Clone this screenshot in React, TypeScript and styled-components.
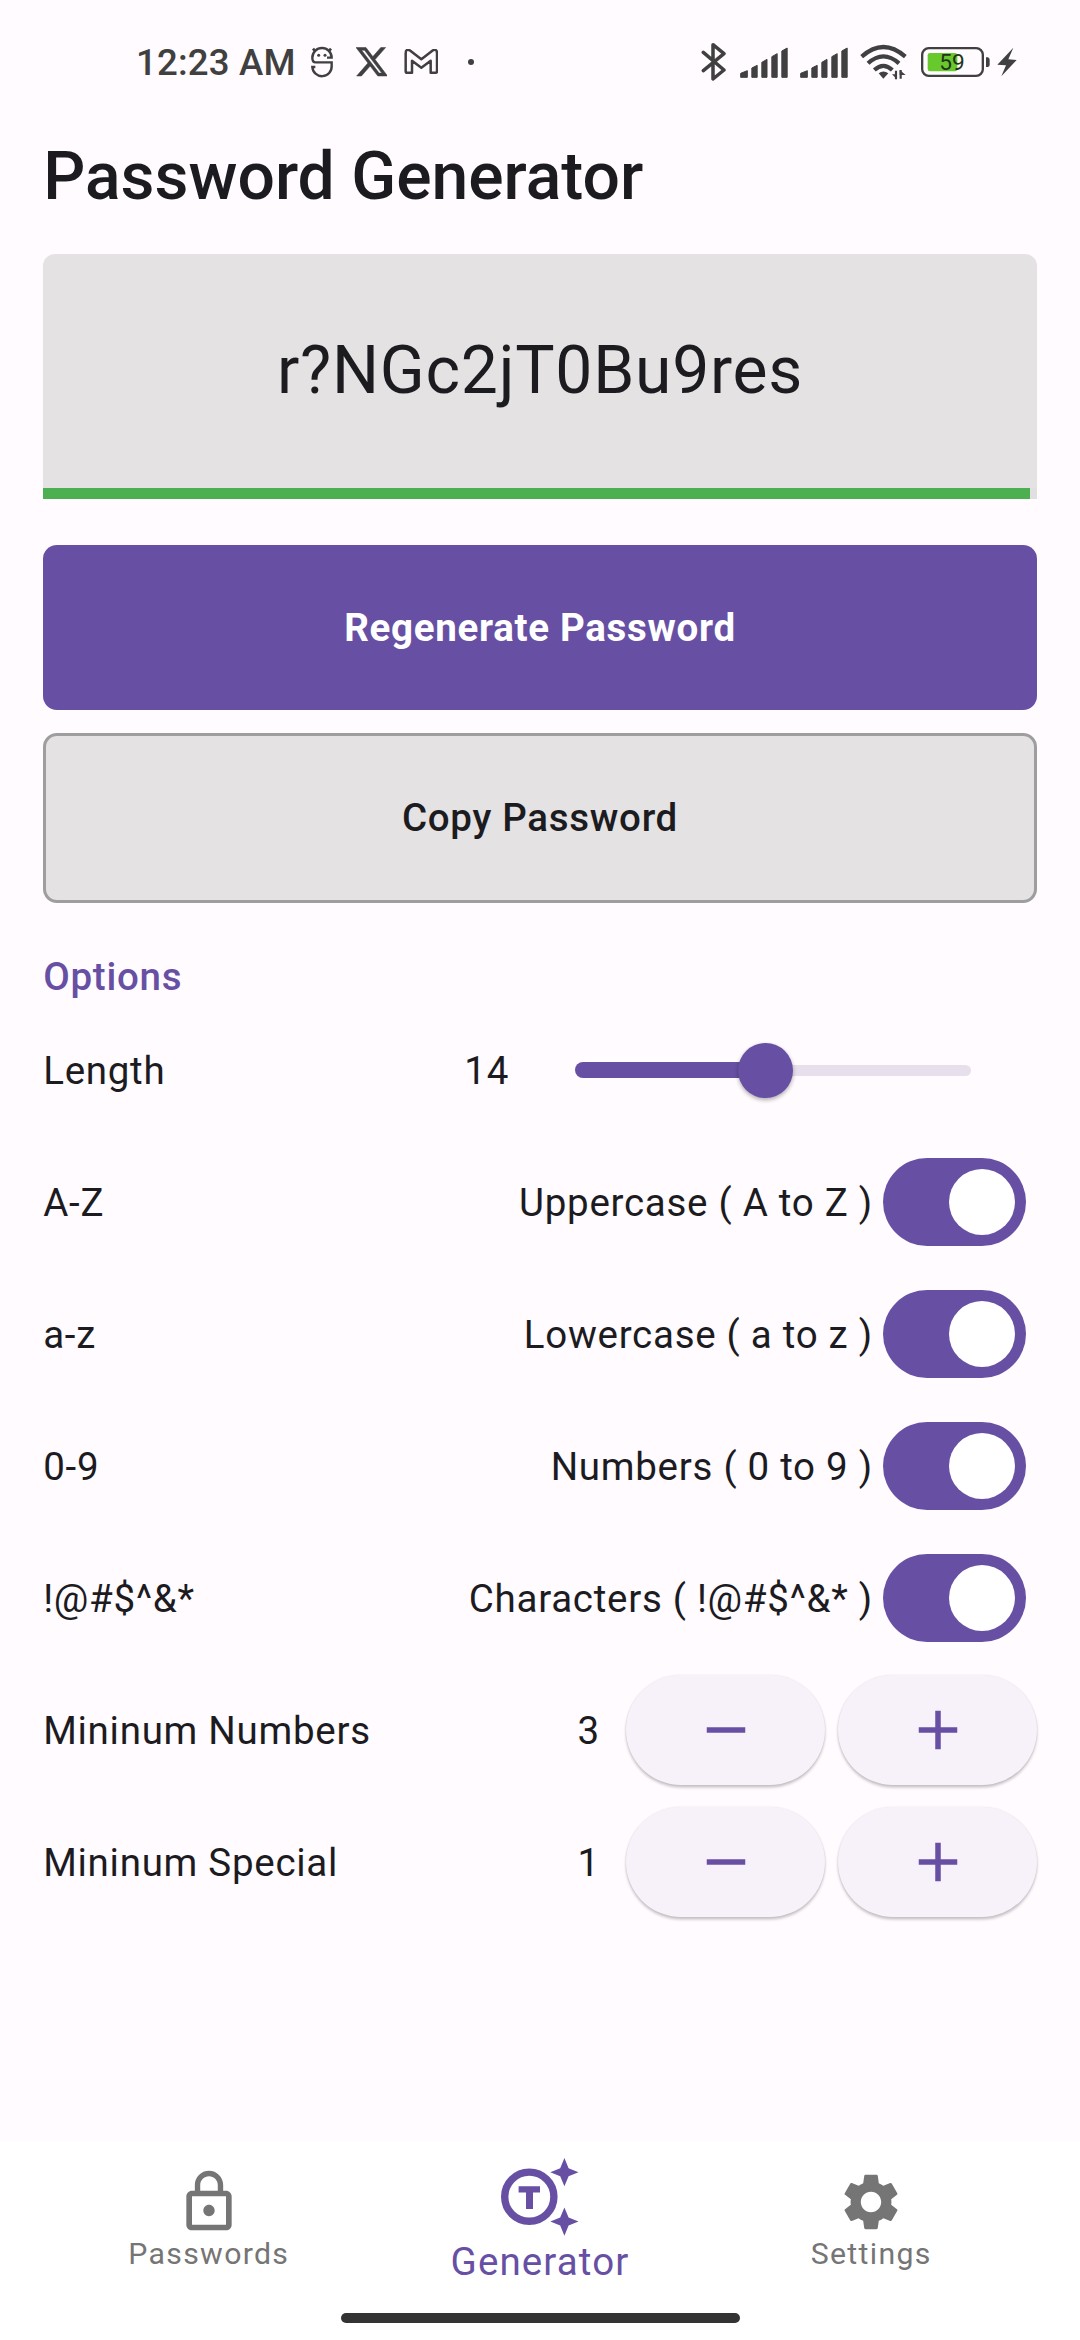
import React, { useState } from "react";
import styled, { createGlobalStyle } from "styled-components";

const purple = "#6750a4";
const ink = "#1c1b1f";
const statusInk = "#404040";

const GlobalStyle = createGlobalStyle`
  * { box-sizing: border-box; }
  body { margin: 0; background: #fffbff; font-family: Roboto, sans-serif; }
  button { font-family: inherit; border: 0; padding: 0; margin: 0; }
  svg { display: block; flex: none; }
`;

const Screen = styled.div`
  width: 1080px;
  height: 2340px;
  display: flex;
  flex-direction: column;
  background: #fffbff;
  color: ${ink};
  overflow: hidden;
`;

/* ---------- status bar ---------- */

const StatusBar = styled.header`
  height: 124px;
  padding: 0 61px 0 136px;
  display: flex;
  align-items: center;
  justify-content: space-between;
  color: ${statusInk};
`;

const StatusGroup = styled.div`
  display: flex;
  align-items: center;
`;

const Clock = styled.span`
  width: 174px;
  padding-top: 2px;
  font-size: 36.6px;
  font-weight: 500;
  line-height: 44px;
  letter-spacing: 0.2px;
  white-space: nowrap;
`;

const IconSlot = styled.span<{ $w: number }>`
  width: ${(p) => p.$w}px;
  display: flex;
  flex: none;
`;

const Dot = styled.span`
  width: 6px;
  height: 6px;
  border-radius: 3px;
  background: ${statusInk};
`;

const RobotIcon = () => (
  <svg width="24" height="32" viewBox="567 48 72 96" fill="none" stroke={statusInk} strokeWidth="7.2">
    <path d="M618 83H632A29 29 0 0 0 574 83C574 92 577 97 584 97H632V108A29 29 0 0 1 574 111H583" />
    <path d="M583 64L576 56M623 64L630 56" strokeWidth="8" />
    <circle cx="593" cy="76" r="4.5" fill={statusInk} stroke="none" />
    <circle cx="612" cy="76" r="4.5" fill={statusInk} stroke="none" />
  </svg>
);

const XIcon = () => (
  <svg width="31.5" height="31.5" viewBox="0 0 24 24" fill={statusInk} stroke={statusInk} strokeWidth="0.4">
    <path d="M18.901 1.153h3.68l-8.04 9.19L24 22.846h-7.406l-5.8-7.584-6.638 7.584H.474l8.6-9.83L0 1.154h7.594l5.243 6.932ZM17.61 20.644h2.039L6.486 3.24H4.298Z" />
  </svg>
);

const MailIcon = () => (
  <svg width="34.7" height="26" viewBox="851 57.5 104 78" fill="none" stroke={statusInk} strokeWidth="7.5" strokeLinejoin="round">
    <path d="M856 70C856 60 862 57 869 62L903 88L937 62C944 57 950 60 950 70V124Q950 129 945 129H931V93L903 114L875 93V129H861Q856 129 856 124Z" />
  </svg>
);

const BluetoothIcon = () => (
  <svg width="26" height="40" viewBox="63 36 78 120" fill="none" stroke={statusInk} strokeWidth="10.5" strokeLinejoin="round" strokeLinecap="round">
    <path d="M70 67L132 120L99 147V44L132 71L70 122" />
  </svg>
);

const SignalIcon = () => (
  <svg width="48" height="31" viewBox="180 51 144 93" fill={statusInk} stroke={statusInk} strokeWidth="3" strokeLinejoin="round">
    <path d="M182 142V130L202 122V142ZM215.5 142V114L231.5 106V142ZM245.5 142V97L261 88V142ZM275.5 142V80L291.5 71V142ZM305.5 142V63L321.5 54V142Z" />
  </svg>
);

const WifiIcon = () => (
  <svg width="47" height="36" viewBox="541 44 141 108" fill="none" stroke={statusInk} strokeWidth="12.5">
    <path d="M546 82Q611 24 677 82" />
    <path d="M565 102Q611 60 658 102" />
    <path d="M584 122Q611 97 638 122" />
    <path d="M597 132Q611 121 626 132L611 148Z" fill={statusInk} stroke="none" />
    <path d="M649 150V124M663 122V148" strokeWidth="6.5" />
    <path d="M637 135H652V150ZM660 122L678 137H660Z" fill={statusInk} stroke="none" />
  </svg>
);

const BatteryIcon = () => (
  <svg width="70" height="30" viewBox="726 51 210 90">
    <rect x="729.5" y="54.5" width="182" height="83" rx="20" fill="none" stroke={statusInk} strokeWidth="7" />
    <rect x="746" y="69" width="89" height="55" rx="7" fill="#68c92c" />
    <path d="M921 82H927Q932 84 932 89V104Q932 109 927 111H921Z" fill={statusInk} />
    <text x="781" y="121" fontSize="68" fontFamily="Roboto, sans-serif" fill="#23331c">59</text>
  </svg>
);

const BoltIcon = () => (
  <svg width="20" height="30" viewBox="953 51 60 90" fill={statusInk}>
    <path d="M1002 53L954 104L980 106L966 139L1012 90L987 88Z" />
  </svg>
);

/* ---------- generator page ---------- */

const Page = styled.main`
  flex: 1;
  padding: 0 43.2px;
  display: flex;
  flex-direction: column;
`;

const Title = styled.h1`
  margin: 13px 0 37px;
  font-size: 66px;
  font-weight: 500;
  line-height: 80px;
  white-space: nowrap;
`;

const PasswordCard = styled.section`
  height: 245px;
  display: flex;
  flex-direction: column;
  background: #e4e2e2;
  border-radius: 12px 12px 0 0;
  overflow: hidden;
`;

const PasswordText = styled.div`
  flex: 1;
  display: flex;
  align-items: center;
  justify-content: center;
  font-size: 66px;
  letter-spacing: 0.75px;
`;

const StrengthTrack = styled.div`
  height: 11.3px;
  background: #e0e0e0;
`;

const StrengthFill = styled.div`
  height: 100%;
  background: #4caf50;
`;

const ActionButton = styled.button<{ $primary?: boolean }>`
  flex: none;
  height: ${(p) => (p.$primary ? 165 : 170.5)}px;
  margin-top: ${(p) => (p.$primary ? 45.5 : 23)}px;
  border-radius: 14px;
  border: ${(p) => (p.$primary ? "0" : "3px solid #9e9e9e")};
  background: ${(p) => (p.$primary ? purple : "#e4e2e2")};
  color: ${(p) => (p.$primary ? "#fff" : ink)};
  font-size: 38.5px;
  font-weight: ${(p) => (p.$primary ? 700 : 500)};
  letter-spacing: 0.7px;
`;

const SectionTitle = styled.h2`
  margin: 46px 0 0;
  height: 55px;
  font-size: 38.5px;
  font-weight: 500;
  line-height: 55px;
  letter-spacing: 0.75px;
  color: ${purple};
`;

const OptionRow = styled.div`
  height: 132px;
  display: flex;
  align-items: center;
  font-size: 38.5px;
  line-height: 56px;
  letter-spacing: 0.72px;
  white-space: nowrap;
`;

const Label = styled.span`
  flex: 1;
  padding-top: 1px;
`;

const Value = styled.span<{ $gap: number }>`
  margin-right: ${(p) => p.$gap}px;
  padding-top: 1px;
`;

const SliderRoot = styled.div`
  width: 396px;
  height: 56px;
  margin-right: 65.8px;
  display: flex;
  align-items: center;
`;

const SliderActive = styled.div`
  height: 16.5px;
  border-radius: 8.25px 0 0 8.25px;
  background: ${purple};
`;

const SliderThumb = styled.div`
  flex: none;
  width: 55px;
  height: 55px;
  margin: 0 -27.5px;
  border-radius: 50%;
  background: ${purple};
  box-shadow: 0 2px 4px rgba(0, 0, 0, 0.32);
  z-index: 1;
`;

const SliderRest = styled.div`
  flex: 1;
  height: 11px;
  border-radius: 0 5.5px 5.5px 0;
  background: #e7e0ec;
`;

const Switch = styled.button<{ $on: boolean }>`
  width: 143px;
  height: 88px;
  margin-right: 10.8px;
  padding: 0 11px;
  display: flex;
  align-items: center;
  justify-content: ${(p) => (p.$on ? "flex-end" : "flex-start")};
  border-radius: 44px;
  background: ${(p) => (p.$on ? purple : "#e7e0ec")};
`;

const SwitchKnob = styled.span`
  width: 66px;
  height: 66px;
  border-radius: 50%;
  background: #fff;
`;

const StepperGroup = styled.div`
  display: flex;
  gap: 13.2px;
`;

const StepButton = styled.button`
  width: 198.6px;
  height: 110px;
  display: flex;
  align-items: center;
  justify-content: center;
  border-radius: 55px;
  background: #f7f2fa;
  color: ${purple};
  box-shadow: 0 2.5px 3px rgba(0, 0, 0, 0.22), 0 0 2px rgba(0, 0, 0, 0.1);
`;

const StepIcon = ({ plus }: { plus?: boolean }) => (
  <svg width="66" height="66" viewBox="0 0 24 24" fill="currentColor">
    <path d={plus ? "M19 13h-6v6h-2v-6H5v-2h6V5h2v6h6v2z" : "M19 13H5v-2h14v2z"} />
  </svg>
);

/* ---------- bottom navigation ---------- */

const NavBar = styled.nav`
  height: 198px;
  background: #fff;
  display: flex;
  flex-direction: column;
`;

const NavItems = styled.div`
  height: 171px;
  padding: 0 43.2px;
  display: flex;
`;

const NavItem = styled.div<{ $active?: boolean }>`
  flex: 1;
  display: flex;
  flex-direction: column;
  align-items: center;
  padding-top: ${(p) => (p.$active ? 15 : 26)}px;
  color: ${(p) => (p.$active ? purple : "#757575")};
`;

const NavLabel = styled.span<{ $active?: boolean }>`
  margin-top: ${(p) => (p.$active ? 1.5 : -0.5)}px;
  font-size: ${(p) => (p.$active ? 38.5 : 30.25)}px;
  line-height: ${(p) => (p.$active ? 46 : 36)}px;
  letter-spacing: ${(p) => (p.$active ? 1.12 : 1.3)}px;
`;

const HomeHandle = styled.div`
  width: 399px;
  height: 10px;
  margin: 0 auto;
  border-radius: 5px;
  background: #333;
`;

const LockIcon = () => (
  <svg width="68" height="68" viewBox="0 0 24 24" fill="currentColor">
    <path d="M12 17c1.1 0 2-.9 2-2s-.9-2-2-2-2 .9-2 2 .9 2 2 2zm6-9h-1V6c0-2.76-2.24-5-5-5S7 3.24 7 6v2H6c-1.1 0-2 .9-2 2v10c0 1.1.9 2 2 2h12c1.1 0 2-.9 2-2V10c0-1.1-.9-2-2-2zM8.9 6c0-1.71 1.39-3.1 3.1-3.1s3.1 1.39 3.1 3.1v2H8.9V6zM18 20H6V10h12v10z" />
  </svg>
);

const TokenIcon = () => (
  <svg width="80" height="80" viewBox="500 2157 80 80" fill="currentColor">
    <circle cx="529.3" cy="2196.7" r="24.6" fill="none" stroke="currentColor" strokeWidth="7.4" />
    <path d="M518.6 2186.2H540V2192.5H533V2209H526V2192.5H518.6Z" />
    <path d="M564.4 2158L568.6 2168.2L578.5 2172.2L568.6 2176.2L564.4 2186.3L560.2 2176.2L550.3 2172.2L560.2 2168.2Z" />
    <path d="M564.4 2207.5L568.6 2217.6L578.5 2221.6L568.6 2225.6L564.4 2235.8L560.2 2225.6L550.3 2221.6L560.2 2217.6Z" />
  </svg>
);

const GearIcon = () => (
  <svg width="68" height="68" viewBox="0 0 24 24" fill="currentColor">
    <path d="M19.14 12.94c.04-.3.06-.61.06-.94 0-.32-.02-.64-.07-.94l2.03-1.58c.18-.14.23-.41.12-.61l-1.92-3.32c-.12-.22-.37-.29-.59-.22l-2.39.96c-.5-.38-1.03-.7-1.62-.94l-.36-2.54c-.04-.24-.24-.41-.48-.41h-3.84c-.24 0-.43.17-.47.41l-.36 2.54c-.59.24-1.13.57-1.62.94l-2.39-.96c-.22-.08-.47 0-.59.22L2.74 8.87c-.12.21-.08.47.12.61l2.03 1.58c-.05.3-.09.63-.09.94s.02.64.07.94l-2.03 1.58c-.18.14-.23.41-.12.61l1.92 3.32c.12.22.37.29.59.22l2.39-.96c.5.38 1.03.7 1.62.94l.36 2.54c.05.24.24.41.48.41h3.84c.24 0 .44-.17.47-.41l.36-2.54c.59-.24 1.13-.56 1.62-.94l2.39.96c.22.08.47 0 .59-.22l1.92-3.32c.12-.22.07-.47-.12-.61l-2.01-1.58zM12 15.6c-1.98 0-3.6-1.62-3.6-3.6s1.62-3.6 3.6-3.6 3.6 1.62 3.6 3.6-1.62 3.6-3.6 3.6z" />
  </svg>
);

const toggles = [
  { key: "A-Z", hint: "Uppercase ( A to Z )" },
  { key: "a-z", hint: "Lowercase ( a to z )" },
  { key: "0-9", hint: "Numbers ( 0 to 9 )" },
  { key: "!@#$^&*", hint: "Characters ( !@#$^&* )" },
];

const ToggleRow = ({ label, hint }: { label: string; hint: string }) => {
  const [on, setOn] = useState(true);
  return (
    <OptionRow>
      <Label>{label}</Label>
      <Value $gap={10.2}>{hint}</Value>
      <Switch $on={on} onClick={() => setOn(!on)} aria-label={hint}>
        <SwitchKnob />
      </Switch>
    </OptionRow>
  );
};

const StepperRow = ({ label, initial }: { label: string; initial: number }) => {
  const [count, setCount] = useState(initial);
  return (
    <OptionRow>
      <Label>{label}</Label>
      <Value $gap={26.5}>{count}</Value>
      <StepperGroup>
        <StepButton aria-label="Decrease" onClick={() => setCount(Math.max(0, count - 1))}>
          <StepIcon />
        </StepButton>
        <StepButton aria-label="Increase" onClick={() => setCount(count + 1)}>
          <StepIcon plus />
        </StepButton>
      </StepperGroup>
    </OptionRow>
  );
};

export default function App() {
  const strength = 0.9935;
  const slider = 0.481;
  return (
    <>
      <GlobalStyle />
      <Screen>
        <StatusBar>
          <StatusGroup>
            <Clock>12:23 AM</Clock>
            <IconSlot $w={45.5}><RobotIcon /></IconSlot>
            <IconSlot $w={48}><XIcon /></IconSlot>
            <IconSlot $w={64.5}><MailIcon /></IconSlot>
            <Dot />
          </StatusGroup>
          <StatusGroup>
            <IconSlot $w={39}><BluetoothIcon /></IconSlot>
            <IconSlot $w={60}><SignalIcon /></IconSlot>
            <IconSlot $w={60}><SignalIcon /></IconSlot>
            <IconSlot $w={61.5}><WifiIcon /></IconSlot>
            <IconSlot $w={76}><BatteryIcon /></IconSlot>
            <IconSlot $w={22}><BoltIcon /></IconSlot>
          </StatusGroup>
        </StatusBar>

        <Page>
          <Title>Password Generator</Title>
          <PasswordCard>
            <PasswordText>r?NGc2jT0Bu9res</PasswordText>
            <StrengthTrack>
              <StrengthFill style={{ width: `${strength * 100}%` }} />
            </StrengthTrack>
          </PasswordCard>
          <ActionButton $primary>Regenerate Password</ActionButton>
          <ActionButton>Copy Password</ActionButton>

          <SectionTitle>Options</SectionTitle>
          <OptionRow>
            <Label>Length</Label>
            <Value $gap={66}>14</Value>
            <SliderRoot>
              <SliderActive style={{ width: `${slider * 100}%` }} />
              <SliderThumb />
              <SliderRest />
            </SliderRoot>
          </OptionRow>
          {toggles.map((t) => (
            <ToggleRow key={t.key} label={t.key} hint={t.hint} />
          ))}
          <StepperRow label="Mininum Numbers" initial={3} />
          <StepperRow label="Mininum Special" initial={1} />
        </Page>

        <NavBar>
          <NavItems>
            <NavItem>
              <LockIcon />
              <NavLabel>Passwords</NavLabel>
            </NavItem>
            <NavItem $active>
              <TokenIcon />
              <NavLabel $active>Generator</NavLabel>
            </NavItem>
            <NavItem>
              <GearIcon />
              <NavLabel>Settings</NavLabel>
            </NavItem>
          </NavItems>
          <HomeHandle />
        </NavBar>
      </Screen>
    </>
  );
}
